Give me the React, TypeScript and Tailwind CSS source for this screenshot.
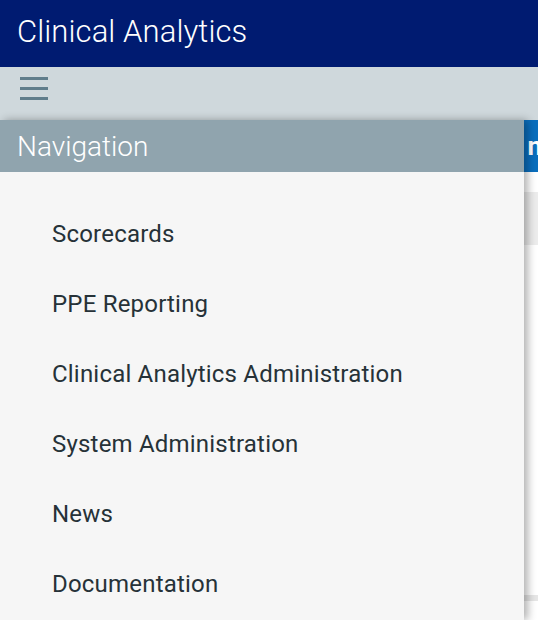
import { useState } from 'react';

const navItems = [
  'Scorecards',
  'PPE Reporting',
  'Clinical Analytics Administration',
  'System Administration',
  'News',
  'Documentation',
];

const App = () => {
  const [open] = useState(true);

  return (
    <div
      className="relative w-[538px] h-[620px] overflow-hidden bg-white"
      style={{ fontFamily: 'Roboto, "Liberation Sans", sans-serif' }}
    >
      {/* top bar */}
      <div className="h-[67px] bg-[#001b71] flex items-center px-[17px] pb-[3px]">
        <span className="text-white text-[31px] font-light tracking-[0.1px]">Clinical Analytics</span>
      </div>

      {/* toolbar */}
      <div className="h-[53px] bg-[#cfd8dc] flex items-start pt-[10px] px-[20px]">
        <div className="flex flex-col gap-[7px] w-[28px]">
          <span className="h-[3px] bg-[#607d8b]" />
          <span className="h-[3px] bg-[#607d8b]" />
          <span className="h-[3px] bg-[#607d8b]" />
        </div>
      </div>

      {/* page content behind drawer */}
      <div className="flex flex-col">
        <div className="h-[52px] bg-[#0a6ebd] flex items-center justify-end overflow-hidden">
          <span className="text-white text-[26px] font-bold mr-[-4px]">n</span>
        </div>
        <div className="h-[20px] bg-white" />
        <div className="h-[53px] bg-[#ececec]" />
        <div className="h-[350px] bg-white" />
        <div className="h-[6px] bg-[#e6e6e6]" />
      </div>

      {/* navigation drawer */}
      {open && (
        <div className="absolute top-[120px] left-0 bottom-0 w-[524px] bg-[#f6f6f6] shadow-[4px_0_8px_rgba(0,0,0,0.3)]">
          <div className="h-[52px] bg-[#90a4ae] flex items-center px-[17px] pt-[2px]">
            <span className="text-white text-[28px] font-light">Navigation</span>
          </div>
          <ul className="pt-[27px]">
            {navItems.map((item) => (
              <li
                key={item}
                className="h-[70px] flex items-center pl-[52px] text-[24px] tracking-[0.2px] text-[#263238]"
              >
                {item}
              </li>
            ))}
          </ul>
        </div>
      )}
    </div>
  );
};

export default App;
